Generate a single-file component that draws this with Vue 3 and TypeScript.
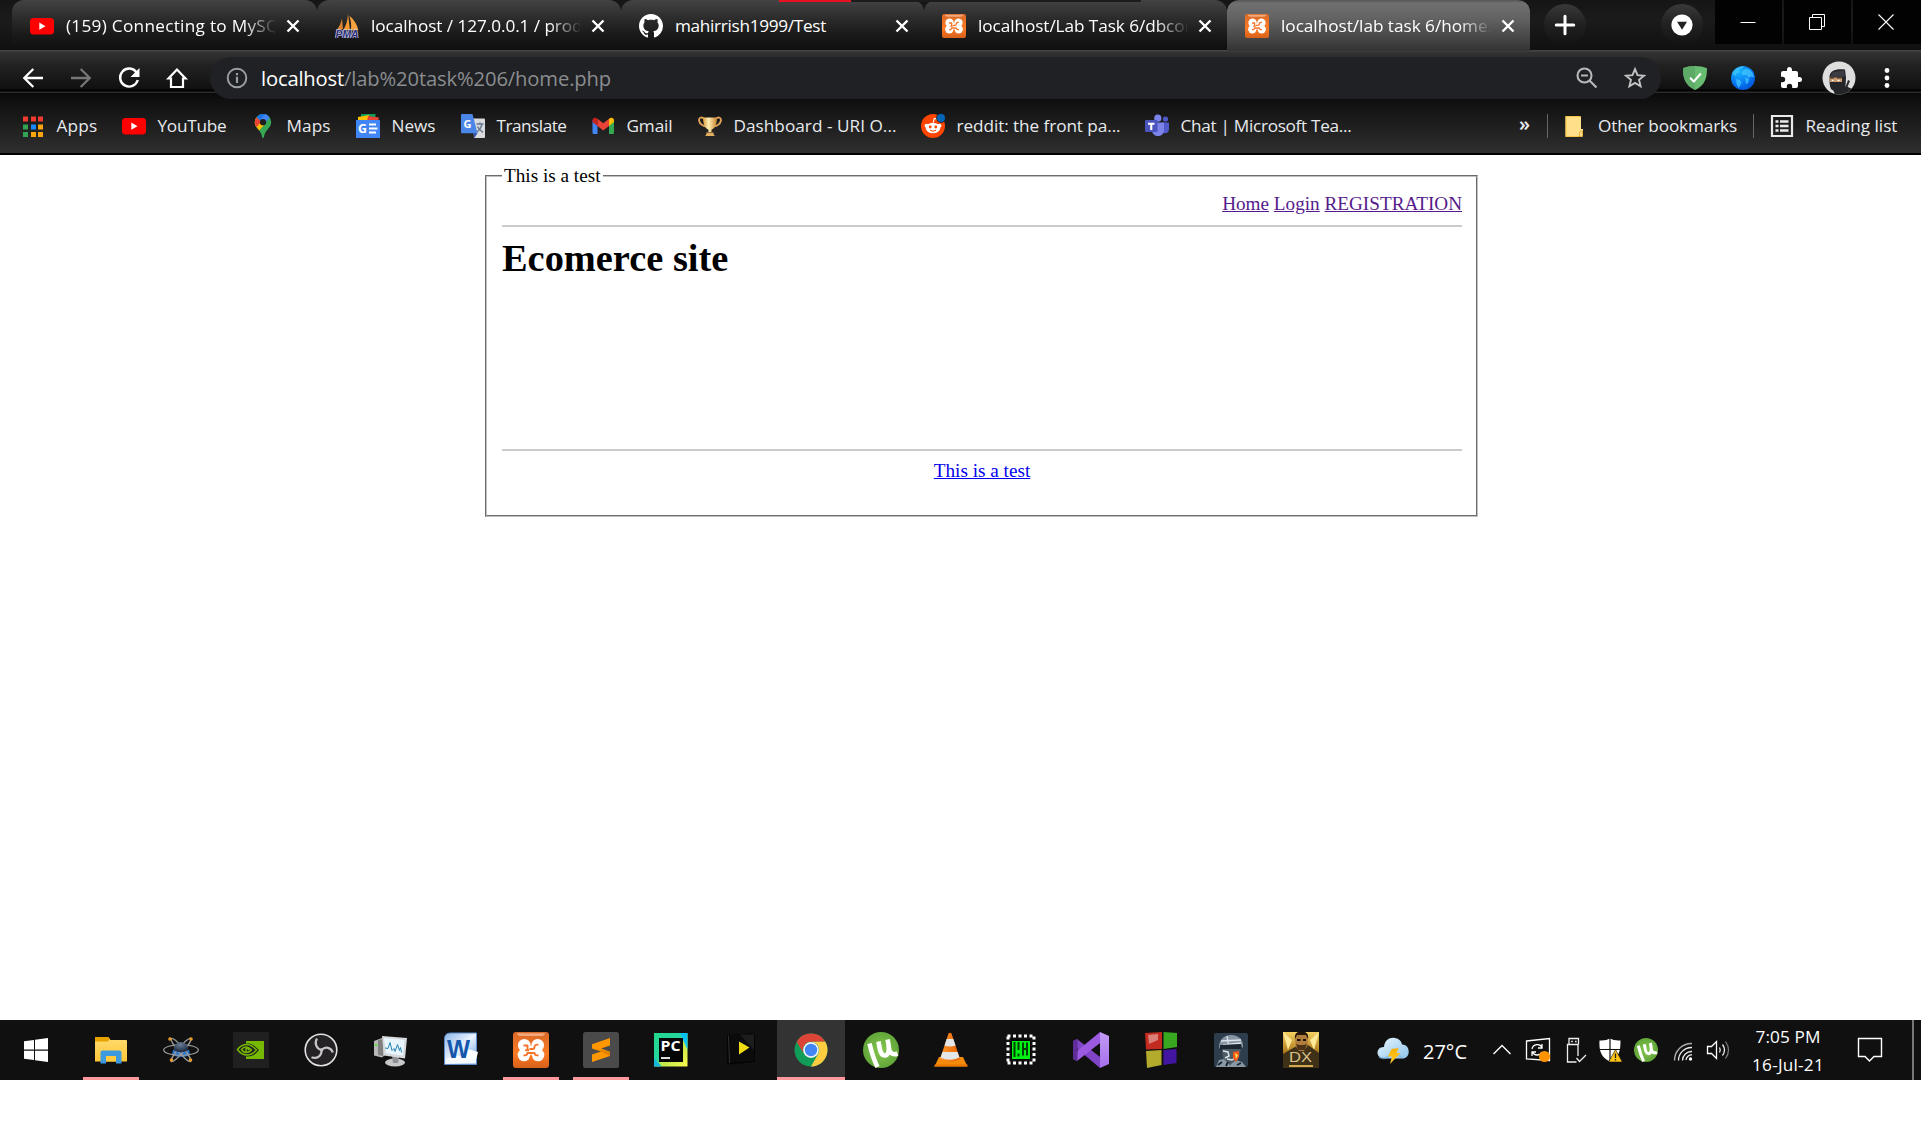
<script setup lang="ts">
interface Tab { icon: string; title: string; width: number; fit: number; active?: boolean; fade?: boolean }
interface Bookmark { icon: string; label: string; fit: number; gap: number }
interface Task { icon: string; state?: 'open' | 'current' }
interface Mark { text: string; x: number; y: number; size: number; width: number; kind: string }

const tabs: Tab[] = [
  { icon: 'youtube', title: '(159) Connecting to MySQL', width: 305, fit: 223, fade: true },
  { icon: 'pma', title: 'localhost / 127.0.0.1 / produ', width: 304, fit: 222, fade: true },
  { icon: 'github', title: 'mahirrish1999/Test', width: 303, fit: 151 },
  { icon: 'xampp', title: 'localhost/Lab Task 6/dbcon', width: 303, fit: 217, fade: true },
  { icon: 'xampp', title: 'localhost/lab task 6/home.', width: 303, fit: 211, active: true, fade: true },
]

const bookmarks: Bookmark[] = [
  { icon: 'apps', label: 'Apps', fit: 41, gap: 24 },
  { icon: 'youtube', label: 'YouTube', fit: 69, gap: 24 },
  { icon: 'maps', label: 'Maps', fit: 44, gap: 25 },
  { icon: 'news', label: 'News', fit: 44, gap: 25 },
  { icon: 'translate', label: 'Translate', fit: 70, gap: 24 },
  { icon: 'gmail', label: 'Gmail', fit: 46, gap: 25 },
  { icon: 'trophy', label: 'Dashboard - URI O...', fit: 163, gap: 24 },
  { icon: 'reddit', label: 'reddit: the front pa...', fit: 164, gap: 24 },
  { icon: 'teams', label: 'Chat | Microsoft Tea...', fit: 171, gap: 24 },
]

const tasks: Task[] = [
  { icon: 'explorer', state: 'open' },
  { icon: 'atom' },
  { icon: 'nvidia' },
  { icon: 'obs' },
  { icon: 'monitor' },
  { icon: 'word' },
  { icon: 'xampp', state: 'open' },
  { icon: 'sublime', state: 'open' },
  { icon: 'pycharm' },
  { icon: 'player' },
  { icon: 'chrome', state: 'current' },
  { icon: 'utorrent' },
  { icon: 'vlc' },
  { icon: 'hwmon' },
  { icon: 'vs' },
  { icon: 'blocks' },
  { icon: 'soldier' },
  { icon: 'deus' },
]

const tray: string[] = ['caret', 'update', 'usb', 'defender', 'tray-ut', 'wifi', 'volume']

// Lettering that sits on top of an icon, in the icon's own pixels.
const marks: Record<string, Mark> = {
  pma: { text: 'PMA', x: 0.5, y: 23.5, size: 10, width: 23, kind: 'pma' },
  news: { text: 'G', x: 2, y: 19, size: 12, width: 9, kind: 'white' },
  translate: { text: 'G', x: 2.5, y: 13.6, size: 11, width: 8, kind: 'white' },
  word: { text: 'W', x: 4, y: 25.5, size: 25, width: 23, kind: 'word' },
  pycharm: { text: 'PC', x: 7.5, y: 19.3, size: 15, width: 20, kind: 'white' },
  deus: { text: 'DX', x: 6, y: 30, size: 14, width: 23, kind: 'deus' },
}

// Spreads letter-spacing so that a label takes the given width in pixels.
const vFit = {
  mounted(el: HTMLElement, binding: { value: number }) {
    const range = document.createRange()
    range.selectNodeContents(el)
    const natural = range.getBoundingClientRect().width
    const count = (el.textContent ?? '').length
    if (count > 0) el.style.letterSpacing = `${((binding.value - natural) / count).toFixed(3)}px`
  },
}
</script>

<template>
  <svg class="sprite" width="0" height="0" aria-hidden="true">
    <defs>
      <linearGradient id="g-orange" x1="0" y1="0" x2="0" y2="1"><stop offset="0" stop-color="#d96a28" /><stop offset=".6" stop-color="#fb7a24" /><stop offset="1" stop-color="#d8601a" /></linearGradient>
      <linearGradient id="g-folder" x1="0" y1="0" x2="0" y2="1"><stop offset="0" stop-color="#ffdc70" /><stop offset="1" stop-color="#ffc637" /></linearGradient>
      <linearGradient id="g-pc" x1="0" y1="0" x2="1" y2="1"><stop offset="0" stop-color="#21d789" /><stop offset=".45" stop-color="#24d7a0" /><stop offset=".55" stop-color="#b9e84e" /><stop offset="1" stop-color="#fcf84a" /></linearGradient>
      <linearGradient id="g-word" x1="0" y1="0" x2="1" y2="1"><stop offset="0" stop-color="#8db5ea" /><stop offset=".5" stop-color="#eaf3fd" /><stop offset="1" stop-color="#5f9ae0" /></linearGradient>
      <linearGradient id="g-cloud" x1="0" y1="0" x2="1" y2="1"><stop offset="0" stop-color="#e8f6ff" /><stop offset="1" stop-color="#8fc4ec" /></linearGradient>
      <linearGradient id="g-cone" x1="0" y1="0" x2="1" y2="0"><stop offset="0" stop-color="#ff9a2e" /><stop offset="1" stop-color="#e65f00" /></linearGradient>
      <linearGradient id="g-bolt" x1="0" y1="0" x2="0" y2="1"><stop offset="0" stop-color="#ffb000" /><stop offset="1" stop-color="#ffcf30" /></linearGradient>
      <linearGradient id="g-vs" x1="0" y1="0" x2="0" y2="1"><stop offset="0" stop-color="#c39bf5" /><stop offset="1" stop-color="#a56fec" /></linearGradient>
      <linearGradient id="g-dx" x1="0" y1="0" x2="0" y2="1"><stop offset="0" stop-color="#f5d061" /><stop offset=".6" stop-color="#a87518" /><stop offset="1" stop-color="#8d681c" /></linearGradient>
      <linearGradient id="g-gold" x1="0" y1="0" x2="1" y2="0"><stop offset="0" stop-color="#d99a3c" /><stop offset=".4" stop-color="#fff0b4" /><stop offset="1" stop-color="#c9822c" /></linearGradient>
      <radialGradient id="g-globe" cx=".35" cy=".25" r=".9"><stop offset="0" stop-color="#18b4ff" /><stop offset=".6" stop-color="#0672ee" /><stop offset="1" stop-color="#0448c8" /></radialGradient>
      <radialGradient id="g-ut" cx=".5" cy=".5" r=".5"><stop offset="0" stop-color="#85c74d" /><stop offset="1" stop-color="#62a63a" /></radialGradient>
      <radialGradient id="g-ball" cx=".45" cy=".25" r=".7"><stop offset="0" stop-color="#6a7d96" /><stop offset="1" stop-color="#1d2b42" /></radialGradient>
    </defs>

    <!-- favicons and bookmark icons -->
    <symbol id="youtube" viewBox="0 0 24 24"><rect y="4" width="24" height="16.500" rx="3.500" fill="#f00" /><path d="M9.300 8.600v7.200l6.200-3.600z" fill="#fff" /></symbol>
    <symbol id="pma" viewBox="0 0 24 24">
      <path d="M7 4.500C6 9 4 13 1 17l7-2z" fill="#d9822f" /><path d="M13 0c-.5 7-2 12-5 16.500l7-.5z" fill="#f79a33" /><path d="M14.500 2c4 3 7.500 8 8.800 14l-7.600.500c1-5 .5-9-1.200-14z" fill="#f7a23c" />
    </symbol>
    <symbol id="github" viewBox="0 0 16 16"><path fill="#fff" d="M8 0C3.580 0 0 3.580 0 8c0 3.540 2.290 6.530 5.470 7.590.4.070.55-.17.55-.38 0-.19-.01-.82-.01-1.490-2.010.37-2.530-.49-2.690-.94-.09-.23-.48-.94-.82-1.130-.28-.15-.68-.52-.01-.53.63-.01 1.080.58 1.230.82.72 1.210 1.870.87 2.330.66.07-.52.28-.87.51-1.070-1.780-.2-3.640-.89-3.640-3.950 0-.87.31-1.590.82-2.150-.08-.2-.36-1.020.08-2.120 0 0 .67-.21 2.200.82.64-.18 1.320-.27 2-.27s1.360.09 2 .27c1.530-1.040 2.200-.82 2.200-.82.44 1.100.16 1.920.08 2.120.51.56.82 1.270.82 2.150 0 3.070-1.870 3.750-3.650 3.950.29.25.54.73.54 1.480 0 1.070-.01 1.930-.01 2.200 0 .21.15.46.55.38A8.010 8.010 0 0 0 16 8c0-4.420-3.580-8-8-8z" /></symbol>
    <symbol id="xampp" viewBox="0 0 36 36">
      <rect width="36" height="36" rx="3" fill="url(#g-orange)" /><path d="M4 1.200h28q-.5 2.800-4 2.800H8q-3.500 0-4-2.800z" fill="#f5b48c" opacity=".85" />
      <g fill="#fff"><circle cx="11.300" cy="13.200" r="6.300" /><circle cx="24.700" cy="13.200" r="6.300" /><circle cx="11" cy="23" r="6.300" /><circle cx="25" cy="23" r="6.300" /><path d="M9 14h18v8.500H9z" /></g>
      <path d="M10.500 13.500h4v3.800M12.200 18.200h4M10.500 23.300c2 .4 3.700-.2 4-2.300h7c.3 2.100 2 2.700 4 2.300M25.300 12.700c-2-.3-3.800.3-3.800 2.300 0 1.200-.7 2-2 2h-3" fill="none" stroke="#f4752a" stroke-width="1.900" stroke-linejoin="round" />
      <path d="M16.500 27v-2.500h3V27z" fill="#f97824" />
    </symbol>
    <symbol id="apps" viewBox="0 0 24 24">
      <path d="M2 2.500h5v5H2zM10 2.500h5v5h-5zM17 2.500h5v5h-5z" fill="#f0392f" /><path d="M2 10.500h5v5H2zM2 18h5v5H2z" fill="#31a352" /><path d="M10 10.500h5v5h-5z" fill="#1a88ff" /><path d="M17 10.500h5v5h-5zM10 18h5v5h-5zM17 18h5v5h-5z" fill="#fba50d" />
    </symbol>
    <symbol id="maps" viewBox="0 0 24 24">
      <clipPath id="c-pin"><path d="M12 0a8.200 8.200 0 0 0-8.200 8.200c0 3 1.500 4.700 3.200 6.800 2 2.500 3.500 4.500 4 7.500.3 2 1.700 2 2 0 .5-3 2-5 4-7.500 1.700-2.100 3.200-3.800 3.200-6.800A8.200 8.200 0 0 0 12 0z" /></clipPath>
      <g clip-path="url(#c-pin)"><path d="M0 0h24v24H0z" fill="#34a853" /><path d="M5 3 14 10 6 19-2 10z" fill="#fbbc04" /><path d="M3 1.500 10.500 7.500 5.500 13-1 8z" fill="#ea4335" /><path d="M5 2.500 9.500 7 19 0H8z" fill="#1a73e8" /><path d="M13 10 20.500 2 16-2 9 6z" fill="#4285f4" /></g><circle cx="12" cy="8.200" r="3.100" fill="#1e1e1e" />
    </symbol>
    <symbol id="news" viewBox="0 0 24 24"><path d="M5 0h14.500v6H5z" fill="#0c9d58" /><path d="m2 3 11-2 1.500 6H2z" fill="#ffc107" /><path d="m12 2 11 1.500-1 4H11z" fill="#ea4335" /><path d="M0 6h24v18H0z" fill="#4285f4" /><path d="M13 10.500h7M13 14.500h8.500M13 18.500h7" stroke="#fff" stroke-width="2" /></symbol>
    <symbol id="translate" viewBox="0 0 24 24"><path d="M12 4.500h11a1 1 0 0 1 1 1V23a1 1 0 0 1-1 1H13z" fill="#d8dade" /><path d="m12 19 4.500 0-3 5z" fill="#3453a8" /><path d="M1 0h10.500l5 19.200H1a1 1 0 0 1-1-1V1a1 1 0 0 1 1-1z" fill="#4a86e8" /><path d="M15.500 10h7M19 8.500v1.500M21 10.500c-1 4-3 6-5 7.500M16.500 12.500c1 2 3 4 5.500 6" stroke="#66778c" stroke-width="1.400" fill="none" /></symbol>
    <symbol id="gmail" viewBox="0 0 24 24"><path d="M1.500 6v12.500c0 1 .5 1.500 1.500 1.500h3.500v-9z" fill="#4285f4" /><path d="M23 6v12.500c0 1-.5 1.500-1.500 1.500H18v-9z" fill="#34a853" /><path d="M1.500 6.500c0-2.700 2.700-3.500 5-1.800V12l-5-4z" fill="#c5221f" /><path d="M23 6.500c0-2.700-2.700-3.500-5-1.800V12l5-4z" fill="#fbbc04" /><path d="m6.500 4.700 5.750 4.500L18 4.700V12l-5.750 4.400L6.500 12z" fill="#ea4335" /></symbol>
    <symbol id="trophy" viewBox="0 0 24 24"><path d="M6.500 5C3 2 .5 4 1.200 7c.8 3.300 4.300 5 7.500 5.500M17.500 5C21 2 23.500 4 22.800 7c-.8 3.300-4.300 5-7.500 5.500" fill="none" stroke="#dca25a" stroke-width="1.900" /><path d="M5 3.500h14c0 6-2 11-5.500 12.200V18h-3v-2.300C7 14.500 5 9.500 5 3.500z" fill="url(#g-gold)" /><path d="M8.500 18.500h7v1.500l1.300 2H7.200l1.300-2z" fill="#e2ad5e" /></symbol>
    <symbol id="reddit" viewBox="0 0 24 24"><circle cx="12" cy="12" r="12" fill="#ff4500" /><path d="m12.300 8.500 1-4 3.500.8" fill="none" stroke="#fff" stroke-width="1.100" /><circle cx="5.500" cy="11.700" r="1.900" fill="#fff" /><circle cx="18.500" cy="11.700" r="1.900" fill="#fff" /><ellipse cx="12" cy="14" rx="7.300" ry="5.200" fill="#fff" /><circle cx="9.200" cy="13" r="1.400" fill="#ff4500" /><circle cx="14.800" cy="13" r="1.400" fill="#ff4500" /><path d="M9 16.200q3 2 6 0" fill="none" stroke="#ff4500" /><circle cx="20" cy="4" r="4.500" fill="#0266b8" stroke="#222" stroke-width=".8" /></symbol>
    <symbol id="teams" viewBox="0 0 24 24"><circle cx="20.500" cy="5" r="2.600" fill="#5059c9" /><path d="M16.500 8.500H24V15c0 5-5 5-7 3z" fill="#5059c9" /><circle cx="12.800" cy="4.200" r="3.600" fill="#7b83eb" /><path d="M7 8.500h12V16c0 8-12 8-12 0z" fill="#7b83eb" /><rect y="6" width="12.500" height="12" rx="1" fill="#4b53bc" /><path d="M3 8.700h6.500v2H7.300V16H5.200v-5.300H3z" fill="#fff" /></symbol>
    <symbol id="folder" viewBox="0 0 24 24"><path d="M2.500 2h14A1.500 1.500 0 0 1 18 3.500V15h2v6.500a1.500 1.500 0 0 1-1.500 1.500h-16z" fill="#ffe08a" /><path d="M2.500 2.500h15M3 3v19.500h13" stroke="#f5c644" fill="none" /><path d="M15.500 22.500c1.300 0 1-1.500 1-3.500 0-1.700 1.500-2 3-2v3.500c0 1.300-.5 2-1.500 2z" fill="#ffe08a" stroke="#dca92e" /></symbol>
    <symbol id="list" viewBox="0 0 24 24"><path d="M2 2h20v20H2z" fill="none" stroke="#e9eaec" stroke-width="2.200" /><path d="M5.500 7.500h3M5.500 12h3M5.500 16.500h3M10 7.500h8.500M10 12h8.500M10 16.500h8.500" stroke="#e9eaec" stroke-width="2.300" /></symbol>
    <symbol id="close" viewBox="0 0 14 14"><path d="m1.500 1.500 11 11m0-11-11 11" stroke="#fff" stroke-width="2.400" /></symbol>

    <!-- toolbar icons -->
    <symbol id="back" viewBox="0 0 24 24"><path d="M22 12H3.500M12.300 3 3.300 12l9 9" fill="none" stroke="#fff" stroke-width="2.300" /></symbol>
    <symbol id="forward" viewBox="0 0 24 24"><path d="M2 12h18.500M11.700 3l9 9-9 9" fill="none" stroke="#777" stroke-width="2.300" /></symbol>
    <symbol id="reload" viewBox="0 0 24 24"><path d="M19.600 6.500A9 9 0 1 0 20.800 14" fill="none" stroke="#fff" stroke-width="2.400" /><path d="M22.500 2v9h-9z" fill="#fff" /></symbol>
    <symbol id="home" viewBox="0 0 24 24"><path d="M12 3.500 3.500 12.500H6V21h12v-8.500h2.500z" fill="none" stroke="#fff" stroke-width="2.200" /></symbol>
    <symbol id="info" viewBox="0 0 24 24"><circle cx="12" cy="12" r="9.300" fill="none" stroke="#9aa0a6" stroke-width="1.900" /><path d="M12 7v2.200M12 10.700v6.200" stroke="#9aa0a6" stroke-width="2.100" /></symbol>
    <symbol id="lens" viewBox="0 0 24 24"><circle cx="9.500" cy="9.500" r="7" fill="none" stroke="#b6b7b9" stroke-width="2.100" /><path d="m14.500 14.500 7 7M6 9.500h7" stroke="#b6b7b9" stroke-width="2.200" /></symbol>
    <symbol id="star" viewBox="0 0 24 24"><path d="m12 3.200 2.500 6 6.500.5-4.950 4.200 1.550 6.400L12 16.900l-5.600 3.400 1.550-6.400L3 9.700l6.500-.5z" fill="none" stroke="#c3c4c6" stroke-width="1.900" /></symbol>
    <symbol id="adguard" viewBox="0 0 24 24"><path d="M12 0c4 0 8.500.8 12 2.200 0 10-2 17-12 21.800C2 19 0 12 0 2.200 3.500.8 8 0 12 0z" fill="#68bc71" /><path d="M12 0v24C2 19 0 12 0 2.200 3.500.8 8 0 12 0z" fill="#5dab66" /><path d="m7 11.800 3.800 3.700 7-8" fill="none" stroke="#fff" stroke-width="2" /></symbol>
    <symbol id="globe" viewBox="0 0 24 24"><circle cx="12" cy="12" r="12" fill="url(#g-globe)" /><path d="M1 8C3 3 8 0 13 .2l-2 2.500-3 .8.500 2.500-3 1.500L5 10 2.500 9zM12 4l3-1.500 3.500 1 3 3 1.500 5-3-1-2.500 1.500-2-3-3 .5-2-2zM5 13l4 1 1.500 2.500L9 20l-1.500 2-2-4zM14 11l4 2-1 4-2 1z" fill="#41c6ff" opacity=".75" /></symbol>
    <symbol id="puzzle" viewBox="0 0 24 24"><path fill="#fff" d="M21.500 11H20V7a2 2 0 0 0-2-2h-4V3.500a2.500 2.500 0 0 0-5 0V5H5a2 2 0 0 0-2 2v3.800h1.500a2.700 2.700 0 0 1 0 5.400H3V20a2 2 0 0 0 2 2h3.800v-1.500a2.700 2.700 0 0 1 5.400 0V22H18a2 2 0 0 0 2-2v-4h1.500a2.500 2.500 0 0 0 0-5z" /></symbol>
    <symbol id="ninja" viewBox="0 0 34 34"><clipPath id="c-av"><circle cx="17" cy="17" r="16.500" /></clipPath><g clip-path="url(#c-av)"><path d="M0 0h34v34H0z" fill="#dedede" /><path d="M7.500 17C7 9.500 14 7.500 23 8.500l1 8-.5 9c3 0 4 2 6.500 2v6.500H12C13 31 12 30 9 28c-1.500-3-1.500-7-1.500-11z" fill="#242529" /><path d="M11 11 22 9.500l1 6-15 .5z" fill="#3b3d42" /><path d="M7.500 16.500h12.500v4.500H8z" fill="#c99a6d" /><path d="M8 17h4M15 17h4.500" stroke="#34241a" stroke-width="1.200" /><path d="M10 19.300h1.500M15.500 19.300h2" stroke="#fff" stroke-width="1.200" /><path d="m26 19 2 1-3 7-1.500-1z" fill="#28292d" /></g></symbol>
    <symbol id="dots" viewBox="0 0 24 24"><g fill="#fff"><circle cx="12" cy="4.500" r="2.400" /><circle cx="12" cy="12" r="2.400" /><circle cx="12" cy="19.500" r="2.400" /></g></symbol>
    <symbol id="plus" viewBox="0 0 42 42"><path d="M21 12.300v17.400M12.300 21h17.400" stroke="#fff" stroke-width="3" stroke-linecap="round" /></symbol>
    <symbol id="down" viewBox="0 0 42 42"><circle cx="21" cy="21" r="10.600" fill="#fff" /><path d="M16 17.700h10L21 25.700z" fill="#222" /></symbol>
    <symbol id="min" viewBox="0 0 16 16"><path d="M.5 8.500h15" stroke="#fff" /></symbol>
    <symbol id="max" viewBox="0 0 16 16"><path d="M.5 3.500h12v12H.500zM3.500 3.500v-3h12v12h-3" fill="none" stroke="#fff" /></symbol>
    <symbol id="exit" viewBox="0 0 16 16"><path d="m.5.5 15 15m0-15-15 15" stroke="#fff" stroke-width="1.100" /></symbol>

    <!-- taskbar icons -->
    <symbol id="windows" viewBox="0 0 36 36"><path d="M6 9.300 16 8v9.500H6zM17 7.800 30 6v11.500H17zM6 18.700h10V28L6 26.700zM17 18.700h13V30l-13-1.800z" fill="#fff" /></symbol>
    <symbol id="explorer" viewBox="0 0 36 36"><path d="M2 6a1 1 0 0 1 1-1h12l2.500 3H33a1 1 0 0 1 1 1v20.500H2z" fill="url(#g-folder)" /><path d="M2 6a1 1 0 0 1 1-1h12l2 2-2 2.500H2z" fill="#e8a200" /><path d="M7.500 31.500V20.500a2 2 0 0 1 2-2h17a2 2 0 0 1 2 2v11H23V24H13v7.500z" fill="#3c9be0" /><path d="M13 24h10v5.500H13z" fill="#ffca40" /></symbol>
    <symbol id="atom" viewBox="0 0 36 36"><path d="M10 18h16l1 5q-9 4-18 0z" fill="#2878d0" /><g fill="none" stroke="#9a9a9a" stroke-width="1.300"><ellipse cx="18" cy="18" rx="17.300" ry="5.300" /><ellipse cx="18" cy="18" rx="15" ry="2.800" transform="rotate(50 18 18)" /><ellipse cx="18" cy="18" rx="15" ry="2.800" transform="rotate(-50 18 18)" /></g><path d="M10.500 18a7.500 8 0 0 1 15 0q-7.500 4.500-15 0z" fill="url(#g-ball)" /><g fill="#e89b28"><circle cx="7" cy="7" r="1.800" /><circle cx="28" cy="7" r="1.800" /><circle cx="8.500" cy="28" r="1.800" /><circle cx="27.500" cy="28" r="1.800" /></g></symbol>
    <symbol id="nvidia" viewBox="0 0 36 36"><path d="M0 0h36v36H0z" fill="#202020" /><path d="M13 9h18v18H13z" fill="#76b900" /><path d="M4 17.500C8 11.500 15 10 20 13c3 2 5.500 4.500 6 5-3 4-7 6.500-12 6.500-5 0-8-3-10-7z" fill="#202020" /><path d="M4.500 17.500C8 12.500 14 11 19 14l4.500 4C20.500 21.500 17.500 23 14 23c-4 0-7-2-9.500-5.500z" fill="none" stroke="#76b900" stroke-width="1.500" /><path d="M8.500 17.500c2.500-3.500 7-3.500 10 .5-2.500 3-7.500 3.500-10-.5zM13 16.500v4.500M12.500 17c2-1.500 3 .2 3.500 1.300" fill="none" stroke="#76b900" stroke-width="1.500" /></symbol>
    <symbol id="obs" viewBox="0 0 36 36"><circle cx="18" cy="18" r="15.800" fill="#242225" stroke="#e2e2e2" stroke-width="1.600" /><path d="M18.500 18C13.500 16.500 11 11.500 14 6.500M18.500 18c4-4 9.500-2.500 11.300 2.500M18.500 18c.5 5.500-4.500 9.500-10 7.200" fill="none" stroke="#c6c5c8" stroke-width="2.200" /><circle cx="18.500" cy="18" r="1.700" fill="#c6c5c8" /></symbol>
    <symbol id="monitor" viewBox="0 0 36 36"><path d="m1 9 8-3 3 3v14l-3 2.500-8-2z" fill="#b8b8b8" /><path d="m5 8 5-1v17l-5-1z" fill="#808080" /><path d="M1.500 13h3" stroke="#56e02c" stroke-width="1.500" /><ellipse cx="22" cy="30.500" rx="10" ry="4" fill="#c6c8ca" /><path d="m19 24 7 1-1 6h-5z" fill="#8f9295" /><path d="m9 4 25 2-2 20.500-21-3z" fill="#d7dadd" /><path d="m11 6 20.500 2L30 23.500l-17-2.300z" fill="#e9f5fc" /><path d="m12 16 3 .5 2-6 2 8 2-2 1 3 2.500-7 2 6 1-3 1 5" fill="none" stroke="#2787b4" stroke-width="1" /></symbol>
    <symbol id="word" viewBox="0 0 36 36"><path d="M1.500 7q0-6 6-6h26v31.500h-32z" fill="url(#g-word)" stroke="#5d8bcc" stroke-width="1" /><path d="M3.500 27Q15 20 33 28v3.500H3.500z" fill="#f7fbff" /><path d="m24.500 17 10.500 3-2 8-11-2z" fill="#fff" /></symbol>
    <symbol id="sublime" viewBox="0 0 36 36"><rect width="36" height="36" rx="2.500" fill="#4a4a4a" /><path d="M9 12.300 27 6v7.500l-9 3 9 3.300V24L9 30v-7.500l9-3-9-3z" fill="#ff9800" /><path d="m9 16.500 18 3.300V24l-9-4.500z" fill="#e08000" /></symbol>
    <symbol id="pycharm" viewBox="0 0 36 36"><path d="M1 1h33.500v33.500H1z" fill="url(#g-pc)" /><path d="M27 1h7.500v17z" fill="#07c3f2" /><path d="M1 26l8 8.500H1z" fill="#16b7d8" /><path d="M6 6h24v24H6z" fill="#050505" /><path d="M8 26h9" stroke="#ddd" stroke-width="2" /></symbol>
    <symbol id="player" viewBox="0 0 36 36"><path d="M4 3 29 1.500l3 2V30L7 32.500 4 31z" fill="#040404" /><path d="M5.500 3.500 6.500 31" stroke="#333" /><path d="M7 3h24v26L7 31z" fill="#0b0b0b" /><path d="M17 2.500h14V18z" fill="#1d1d1d" /><path d="M16 9.500v13l10.500-7z" fill="#f0dc14" /></symbol>
    <symbol id="chrome" viewBox="0 0 36 36"><circle cx="18" cy="18" r="16.500" fill="#119d58" /><path d="M3.700 9.800A16.500 16.500 0 0 1 32.300 9.800H18a8.200 8.200 0 0 0-7.100 12.300z" fill="#db4437" /><path d="M32.300 9.800A16.500 16.500 0 0 1 18 34.500L25.100 22.100A8.200 8.200 0 0 0 18 9.800z" fill="#ffcd40" /><circle cx="18" cy="18" r="7.900" fill="#f4f4f4" /><circle cx="18" cy="18" r="6.200" fill="#4285f4" /></symbol>
    <symbol id="utorrent" viewBox="0 0 36 36"><circle cx="18" cy="18" r="18" fill="url(#g-ut)" /><path d="M6.500 11.500C8 18 10 26 14.500 35M15.500 9.500C16.500 15 17 23.500 21.500 23.500S27 17 24.500 7.500M25.500 15c1 6 4 8.500 9 6.500" fill="none" stroke="#fff" stroke-width="4.600" /></symbol>
    <symbol id="vlc" viewBox="0 0 36 36"><path d="m6 25 24 0 4.500 9.500H1.500z" fill="#f58a0b" /><path d="M2 32.500h32.500v2H1z" fill="#e87600" /><path d="M15.500 1.500q1.500-1.500 3 0L27 27q-9.500 5-20 0z" fill="url(#g-cone)" /><path d="m13.700 7 6.600 0 2.300 6.500q-5.500 2-11.100 0zM9.500 20h15l2 5.500q-9.500 4.500-19 0z" fill="#e3e6e9" /></symbol>
    <symbol id="hwmon" viewBox="0 0 36 36"><path d="M4.500 4h27M4.500 31h27M5 4.500v27M31 4.500v27" fill="none" stroke="#fff" stroke-width="3" stroke-dasharray="3 2.500" /><path d="M8 7.500h20v20H8z" fill="#000" /><path d="M9 9h18v18H9z" fill="#00f214" /><path d="M11.500 10v15M15.500 10v8M20 10.500v13M24 10.500v13M20 17h4M15.500 21.500v3" stroke="#003d05" stroke-width="2" /></symbol>
    <symbol id="vs" viewBox="0 0 36 36"><path d="M0 9 4 7l23 18V36L5 17.500z" fill="#8045c7" /><path d="m0 27 4 2 23-18V0L4 19z" fill="#9b5ae0" /><path d="M0 9 4.500 7v22L0 27z" fill="#5f2d98" /><path d="m27 0 9 4v28l-9 4z" fill="url(#g-vs)" /></symbol>
    <symbol id="blocks" viewBox="0 0 36 36"><path d="m2 1 17-1v17L3 17.500z" fill="#c42b20" /><path d="M20.500 0 34 1v14l-13.500 2z" fill="#38a820" /><path d="m3 19 15.500-1v15L4 36z" fill="#b3ab2c" /><path d="m20.500 18 13-1v14l-13 2z" fill="#4316a2" /><path d="m5 3 10-1v6L6 12z" fill="#fff" opacity=".4" /></symbol>
    <symbol id="soldier" viewBox="0 0 36 36"><rect x="1" y="1" width="34" height="34" rx="2" fill="#2d3d4b" /><path d="M6 15C6 7 12 3 18 3c8 0 12 5 12 11l-1 3H7z" fill="#8796a2" /><path d="M8 9 28 8M14 4l2 12M10 13l18-2" stroke="#dce4e9" stroke-width="1.300" /><path d="M7 13l21-1 1 5-22 1z" fill="#1b2630" /><path d="M9 17h19l-2 9-5 6h-6l-5-6z" fill="#4d5a64" /><path d="m3 35 3-7 5-1 6 6 6-5 6 2 4 5z" fill="#8898a5" /><path d="m10 19 5 1 1 4-4 2M14 27l5 1 3-2" stroke="#dbe4e9" stroke-width="1.500" fill="none" /><path d="m20 20 6-1 0 6-3 5-3-4z" fill="#f05a19" /><path d="m22 21 3 2-2 4z" fill="#ffe05a" /><path d="m5 33 4-3M13 34l2-4M24 33l4-2" stroke="#18222b" stroke-width="1.800" /></symbol>
    <symbol id="deus" viewBox="0 0 36 36"><path d="M0 0h36v36H0z" fill="url(#g-dx)" /><path d="m0 0 9 8-4 10zM36 0l-9 8 4 10z" fill="#ffe898" /><path d="m0 22 12-7 13-2 11 8v15H0z" fill="#3f3018" /><path d="M12 5c1-5 12-5 13 0l-.5 9-3.500 5h-5l-3.500-5z" fill="#b07d3c" /><path d="M12 7C11 0 16-1 19 0c4-1 7 2 6 7l-2-4h-9z" fill="#221609" /><path d="M14 8h3.500M20 8h3" stroke="#1d1208" stroke-width="1.800" /><path d="m13 12 3 1h5l3-1-2 6h-7z" fill="#4c3216" /><path d="M6 34h24" stroke="#cfa94e" stroke-width="2" /></symbol>

    <!-- tray icons -->
    <symbol id="weather" viewBox="0 0 36 36"><path d="M9.500 26.500C-.5 26.500 1 14.500 9 15 9.500 8 15 5 20 6c4 .8 6.500 3 7 6.500C35 12 36.500 25.500 28 26.500z" fill="url(#g-cloud)" /><path d="M4 25q5 3 10-1t14 2" fill="none" stroke="#78b3df" stroke-width="2" opacity=".6" /><path d="m16.500 17 7-1-2 5h4L15 32l2-7.500h-4z" fill="url(#g-bolt)" /></symbol>
    <symbol id="caret" viewBox="0 0 36 36"><path d="m9.500 22 8.500-8.500 8.500 8.500" fill="none" stroke="#fff" stroke-width="1.400" /></symbol>
    <symbol id="update" viewBox="0 0 36 36"><path d="m6.500 9 23-2.500v22L6.500 27z" fill="none" stroke="#fff" stroke-width="1.300" /><path d="M12 17c1-5 8-6 10-1.500M22 12v4h-4M22 20c-2 4-8 4-9.500 0M12 24v-4h4" fill="none" stroke="#fff" stroke-width="1.300" /><circle cx="24.500" cy="24.500" r="5.600" fill="#ff9400" /></symbol>
    <symbol id="usb" viewBox="0 0 36 36"><path d="M22 24V12.500H11.500V30h9M13 12.500V6.500h9.500v6M15.200 9.500h1.600M19 9.500h1.600M20.500 26l3 3.500L30 23" fill="none" stroke="#eee" stroke-width="1.300" /></symbol>
    <symbol id="defender" viewBox="0 0 36 36"><path d="M18 6.500q4 2.500 10.500 2c0 10-1 16.500-10.500 21C8.500 25 7 18.500 7.500 8.500q6.500.5 10.500-2z" fill="#fff" /><path d="M18 6v24M7 17.500h22" stroke="#101010" stroke-width="1.200" /><path d="m23.500 17.500 6.800 12.500H16.700z" fill="#ffc414" stroke="#101010" stroke-width=".6" /><path d="M23.500 21.500v4.500M23.500 27v1.500" stroke="#222" stroke-width="1.300" /></symbol>
    <symbol id="tray-ut" viewBox="-9 -9 54 54"><use href="#utorrent" width="36" height="36" /></symbol>
    <symbol id="wifi" viewBox="0 0 36 36"><path d="M10.500 28.500A17 17 0 0 1 28 11.500" fill="none" stroke="#aaa" stroke-width="1.400" /><path d="M14.500 28.500A13 13 0 0 1 28 15.500M18.500 28.500a9 9 0 0 1 9.500-9M22 28a5.500 5.500 0 0 1 6-5" fill="none" stroke="#eee" stroke-width="1.300" /><circle cx="26.500" cy="27" r="1.700" fill="#fff" /></symbol>
    <symbol id="volume" viewBox="0 0 36 36"><path d="M7.500 14.500h4l5-5v17l-5-5h-4z" fill="none" stroke="#fff" stroke-width="1.300" /><path d="M19.500 15.500q1.500 2.500 0 5M22.500 12.500q4 5.500 0 11" fill="none" stroke="#eee" stroke-width="1.300" /><path d="M25.500 9.500q6 8.500 0 17" fill="none" stroke="#777" stroke-width="1.300" /></symbol>
    <symbol id="bubble" viewBox="0 0 36 36"><path d="M6.500 6.500h23v18H22l-4.500 4.500-4.500-4.500H6.500z" fill="none" stroke="#fff" stroke-width="1.400" /></symbol>
  </svg>

  <div class="desktop">
    <header class="browser">
      <div class="strip">
        <div class="tabs">
          <div v-for="(tab, i) in tabs" :key="i" class="tab" :class="{ active: tab.active, before: i === 3 }" :style="{ width: tab.width + 'px' }">
            <svg class="fav">
              <use :href="'#' + tab.icon" />
              <text v-if="marks[tab.icon]" :class="'mark-' + marks[tab.icon].kind" :x="marks[tab.icon].x" :y="marks[tab.icon].y" :font-size="marks[tab.icon].size" :textLength="marks[tab.icon].width" lengthAdjust="spacingAndGlyphs">{{ marks[tab.icon].text }}</text>
            </svg>
            <div class="title" :class="{ fade: tab.fade }"><span v-fit="tab.fit">{{ tab.title }}</span></div>
            <svg class="x"><use href="#close" /></svg>
          </div>
        </div>
        <svg class="round plus"><use href="#plus" /></svg>
        <svg class="round down"><use href="#down" /></svg>
        <div class="controls">
          <div v-for="c in ['min', 'max', 'exit']" :key="c" class="control"><svg><use :href="'#' + c" /></svg></div>
        </div>
        <div class="notch"></div>
      </div>

      <div class="lower">
        <nav class="toolbar">
          <svg v-for="n in ['back', 'forward', 'reload', 'home']" :key="n" class="tool"><use :href="'#' + n" /></svg>
          <div class="address">
            <svg class="tool"><use href="#info" /></svg>
            <div class="url"><span v-fit="83" class="host">localhost</span><span v-fit="267">/lab%20task%206/home.php</span></div>
            <svg class="tool"><use href="#lens" /></svg>
            <svg class="tool"><use href="#star" /></svg>
          </div>
          <svg class="tool"><use href="#adguard" /></svg>
          <svg class="tool"><use href="#globe" /></svg>
          <svg class="tool puzzle"><use href="#puzzle" /></svg>
          <svg class="avatar"><use href="#ninja" /></svg>
          <svg class="tool"><use href="#dots" /></svg>
        </nav>
        <div class="bookmarks">
          <div v-for="b in bookmarks" :key="b.label" class="bookmark" :style="{ marginRight: b.gap + 'px' }">
            <svg class="fav">
              <use :href="'#' + b.icon" />
              <text v-if="marks[b.icon]" :class="'mark-' + marks[b.icon].kind" :x="marks[b.icon].x" :y="marks[b.icon].y" :font-size="marks[b.icon].size" :textLength="marks[b.icon].width" lengthAdjust="spacingAndGlyphs">{{ marks[b.icon].text }}</text>
            </svg>
            <span class="label" :style="{ width: b.fit + 'px' }"><span v-fit="b.fit">{{ b.label }}</span></span>
          </div>
          <span class="more">»</span>
          <i class="divider"></i>
          <div class="bookmark other">
            <svg class="fav"><use href="#folder" /></svg>
            <span class="label"><span v-fit="139">Other bookmarks</span></span>
          </div>
          <i class="divider"></i>
          <div class="bookmark reading">
            <svg class="fav"><use href="#list" /></svg>
            <span class="label"><span v-fit="92">Reading list</span></span>
          </div>
        </div>
      </div>
    </header>

    <main class="page">
      <fieldset class="box">
        <legend>This is a test</legend>
        <div class="links"><a>Home</a>&#32;<a>Login</a>&#32;<a>REGISTRATION</a></div>
        <hr>
        <h1>Ecomerce site</h1>
        <hr>
        <div class="foot"><a>This is a test</a></div>
      </fieldset>
    </main>

    <footer class="taskbar">
      <div class="start"><svg class="app"><use href="#windows" /></svg></div>
      <div class="tasks">
        <div v-for="t in tasks" :key="t.icon" class="task" :class="t.state">
          <svg class="app">
            <use :href="'#' + t.icon" />
            <text v-if="marks[t.icon]" :class="'mark-' + marks[t.icon].kind" :x="marks[t.icon].x" :y="marks[t.icon].y" :font-size="marks[t.icon].size" :textLength="marks[t.icon].width" lengthAdjust="spacingAndGlyphs">{{ marks[t.icon].text }}</text>
          </svg>
        </div>
      </div>
      <svg class="app"><use href="#weather" /></svg>
      <span class="temp"><span v-fit="44">27°C</span></span>
      <div class="tray"><svg v-for="t in tray" :key="t" class="app"><use :href="'#' + t" /></svg></div>
      <div class="clock"><span v-fit="65">7:05 PM</span><span v-fit="72">16-Jul-21</span></div>
      <svg class="app notes"><use href="#bubble" /></svg>
      <i class="peek"></i>
    </footer>
  </div>
</template>

<style>
body { background: #fff; overflow: hidden; }
</style>

<style scoped>
.sprite { position: absolute; }
.desktop { width: 1921px; height: 1137px; overflow: hidden; background: #fff; font-family: "Open Sans", "Noto Sans", sans-serif; }
svg { display: block; flex: none; }
.mark-white { fill: #fff; font-weight: 700; }
.mark-pma { fill: #2d2f72; stroke: #c8c9e6; stroke-width: 1.4px; paint-order: stroke; font-family: "Liberation Sans", sans-serif; font-weight: 700; font-style: italic; }
.mark-word { fill: #1556ad; font-family: "Liberation Sans", sans-serif; font-weight: 700; }
.mark-deus { fill: #d9c189; font-family: "Liberation Sans", sans-serif; }
.browser { height: 155px; display: flex; flex-direction: column; background: #111; color: #fff; }
.strip { position: relative; height: 50px; box-sizing: border-box; display: flex; background: linear-gradient(#151515, #1b1b1b 40%, #101010); }
.tabs { display: flex; padding-left: 12px; width: 1519px; }
.tab { position: relative; height: 49px; box-sizing: border-box; flex: none; display: flex; align-items: center; padding: 2px 0 0 18px; border-radius: 12px 12px 0 0; background: linear-gradient(#434343, #2d2d2d 35%, #1a1a1a 70%, #101010); }
.tab::after { content: ""; position: absolute; right: -1px; top: 12px; width: 1px; height: 30px; background: #606060; }
.tab.before { border-bottom-right-radius: 10px; }
.tab.before::after, .tab.active::after { display: none; }
.tab.active { height: 51px; padding-bottom: 2px; z-index: 1; background: linear-gradient(#555, #707070 6%, #636363 35%, #333); }
.fav { width: 24px; height: 24px; }
.title { width: 209px; margin-left: 12px; overflow: hidden; white-space: nowrap; font-size: 17.200px; line-height: 30px; }
.title.fade { -webkit-mask-image: linear-gradient(90deg, #000 85%, transparent 101%); mask-image: linear-gradient(90deg, #000 85%, transparent 101%); }
.x { width: 14px; height: 14px; margin-left: 11px; }
.round { width: 42px; height: 42px; border-radius: 50%; background: linear-gradient(#393939, #222 45%, #121212); margin-top: 4px; }
.plus { margin-left: 12.500px; }
.down { margin-left: 75px; }
.controls { margin-left: auto; display: flex; gap: 2px; }
.control { width: 67px; height: 44px; background: #020202; display: flex; align-items: center; justify-content: center; }
.control:last-child { width: 68px; }
.control svg { width: 16px; height: 16px; margin-left: -2px; }
.notch { position: absolute; left: 779px; top: 0; width: 362px; height: 2px; background: linear-gradient(90deg, #e81123 72px, #1c1c1c 72px); }
.lower { height: 105px; box-sizing: border-box; padding-top: 7px; background: linear-gradient(#454545 1px, #333 2px, #222 15px, #101010 39px, #000 40px, #000 41px, #2a2a2a 42px, #2a2a2a 43px, #0b0b0b 43px, #1b1b1b 70px, #2f2f2f 103px, #000 103px); }
.toolbar { height: 42px; display: flex; align-items: center; padding-left: 21px; gap: 24px; }
.tool { width: 24px; height: 24px; }
.puzzle { margin: 0 1px 0 -1px; }
.address { width: 1451px; height: 42px; box-sizing: border-box; margin-left: -3px; padding: 0 14px 0 15px; display: flex; align-items: center; gap: 24px; border-radius: 21px; background: #202124; }
.address > .tool:first-child { margin-right: -12px; }
.address + .tool { margin-left: -2px; }
.url { flex: 1; font-size: 20.200px; line-height: 30px; color: #8b8d90; white-space: nowrap; }
.host { color: #fff; }
.avatar { width: 34px; height: 34px; margin: 0 -5px; }
.bookmarks { height: 54px; display: flex; align-items: center; padding-left: 21px; color: #e8eaed; font-size: 17.200px; }
.bookmark { display: flex; align-items: center; gap: 12px; white-space: nowrap; line-height: 28px; }
.label { display: block; text-indent: -.5px; }
.more { width: 12px; margin-left: auto; margin-right: 16px; font-size: 20px; font-weight: 600; line-height: 24px; padding-bottom: 4px; }
.divider { width: 1px; height: 24px; background: #666; }
.other { width: 174px; margin: 0 16px 0 15px; }
.other .label { text-indent: -1px; }
.reading { width: 128px; margin: 0 23px 0 16px; }

.page { height: 865px; box-sizing: border-box; padding-top: 9px; background: #fff; font-family: "Liberation Serif", serif; font-size: 19.200px; line-height: 22px; color: #000; }
.box { width: 993px; height: 353px; box-sizing: border-box; margin: 0 0 0 485px; border: 2px groove #c0c0c0; padding: 5px 14px 0 15px; }
.box legend { padding: 1px 3px 0 2px; }
.links { text-align: right; white-space: pre; color: #551a8b; margin-top: 1px; }
a { text-decoration: underline; }
.box hr { height: 2px; border: 0; background: #cbcbcb; margin: 10px 0 9px; }
.box h1 { height: 203px; box-sizing: border-box; margin: 0; font-size: 38.400px; line-height: 44px; }
.foot { text-align: center; color: #00e; }

.taskbar { height: 60px; display: flex; align-items: center; background: #101010; color: #fff; }
.app { width: 36px; height: 36px; }
.start { width: 72px; display: flex; justify-content: center; }
.tasks { display: flex; margin-left: 4px; width: 1299px; }
.task { width: 70px; height: 60px; flex: none; position: relative; display: flex; align-items: center; justify-content: center; }
.open::after, .current::after { content: ""; position: absolute; left: 7px; right: 7px; bottom: 0; height: 3px; background: #ff999d; }
.current { background: linear-gradient(#333, #333) center / 68px 60px no-repeat; }
.current::after { left: 1px; right: 1px; }
.temp { width: 61px; margin-left: 12px; padding-top: 2px; font-size: 20px; white-space: nowrap; }
.tray { display: flex; }
.clock { width: 104px; display: flex; flex-direction: column; align-items: center; padding-top: 2px; font-size: 17.200px; line-height: 28px; white-space: nowrap; }
.notes { margin-left: 12px; }
.peek { width: 2px; height: 60px; margin-left: 24px; background: #777; }
</style>
